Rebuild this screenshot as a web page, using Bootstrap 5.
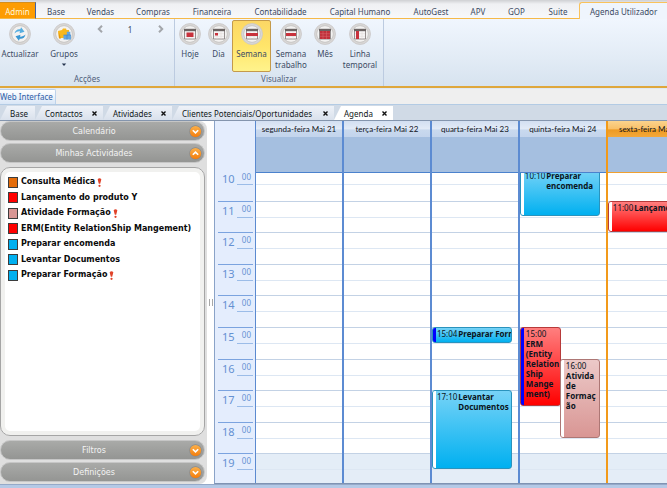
<!DOCTYPE html>
<html lang="pt">
<head>
<meta charset="utf-8">
<meta name="viewport" content="width=device-width, initial-scale=1">
<title>Agenda Utilizador</title>
<link href="https://cdn.jsdelivr.net/npm/bootstrap@5.3.0/dist/css/bootstrap.min.css" rel="stylesheet">
<style>
body{height:100vh;min-height:480px;font-family:"Noto Sans","Open Sans",sans-serif;font-size:8px;line-height:11px;color:#3b4a63;background:#fff;overflow:hidden}
button{border:0;background:none;padding:0;color:inherit;font:inherit}
a{color:inherit;text-decoration:none}
/* ribbon */
.ribbon-tabs{display:grid;grid-template-columns:36px 40px 49px 56px 62px 75px 84px 58px 36px 41px 42px 1fr;height:19px;background:linear-gradient(#cfd0d3,#eff0f3 4px,#f8f9fb)}
.ribbon-tabs a{display:flex;align-items:center;justify-content:center;padding-top:4px;border-bottom:1px solid #f6b948;white-space:nowrap}
.ribbon-tabs a.admin-tab{background:#fd9c02;color:#fff8dc;border-right:1px solid #3f62a8;border-top:1px solid #d58e1c;margin-top:2px;padding-top:1px}
.ribbon-tabs a.open-tab{justify-content:flex-start;background:#eff5fd;border:1px solid #f9c25b;border-width:1px 0 0 1px;border-radius:3px 0 0 0;margin-top:2px;padding:1px 0 0 10px}
.ribbon{height:69px;background:linear-gradient(#f0f6fe,#e3ecf6 55%,#d7e3ef);border-bottom:2px solid #dfa73c}
.ribbon-group{display:grid;grid-template-rows:1fr 13px;border-right:1px solid #bccbe0;text-align:center}
.ribbon-group h2{font-size:8px;line-height:11px;margin:0;font-weight:400;color:#52617c}
.tool{display:flex;flex-direction:column;align-items:center;padding-top:2px;border:1px solid transparent;border-radius:2px;height:52px;margin-top:1px}
.tool svg{width:22px;height:22px;margin-bottom:3px;flex:none}
.tool .caret{height:11px}
.tool.chosen{background:linear-gradient(#fcd765,#ffe56a 50%,#fff38c);border-color:#c49a4b}
.tools-a{display:grid;grid-template-columns:40px 48px 24px 36px 26px}
.tools-b{display:grid;grid-template-columns:30px 27px 39px 40px 28px 42px;padding:0 2px 0 0}
.pager{height:20px;display:flex;align-items:center;justify-content:center}
/* window tabs */
.window-bar{height:17px;background:#efefef;border-top:1px solid #dfe9f4;border-bottom:1px solid #b3cbe4}
.window-bar a{background:linear-gradient(#fff,#d9e6f6);color:#2f5fa8;border:1px solid #bdd2ea;border-width:1px 1px 0 0;border-radius:0 2px 0 0;width:56px;line-height:14px;white-space:nowrap}
.doc-bar{display:grid;grid-template-columns:35px 68px 69px 162px 59px;height:16px;background:#d0dae6;border-bottom:1px solid #8495ad;color:#101820}
.doc-tab{display:flex;align-items:center;justify-content:space-between;height:14px;margin-top:1px;padding:0 6px 0 10px;background:linear-gradient(#eef2f8,#d9e1ec);clip-path:polygon(7px 0,100% 0,100% 100%,0 100%);white-space:nowrap}
.doc-tab.shown{background:#fff}
.doc-tab svg{width:5px;height:5px;display:block}
/* side panel */
.side{width:207px;background:#dfdfdf;border-radius:0 8px 8px 0;padding:0 2px 2px 0;gap:2px}
.side-head{display:flex;align-items:center;height:20px;background:linear-gradient(#a9aaa8,#949593);border:1px solid #c6c6c6;border-radius:10px;color:#f3f3f3;padding-right:2px;font-family:"DejaVu Sans",Verdana,sans-serif;flex:none}
.side-head span{flex:1;padding-right:2px}
.side-head svg{width:13px;height:13px}
.side-list{border:1px solid #a5a5a5;border-radius:10px;background:#fff;box-shadow:inset 0 0 0 4px #f1f1ef;padding:6px 7px;margin:2px 0;font:bold 8px/16px "DejaVu Sans",Verdana,sans-serif;color:#0a0a0a}
.side-list li{display:flex;align-items:center;height:16px;white-space:nowrap}
.side-list li:nth-child(even){height:15px}
.swatch{width:10px;height:11px;border:1px solid #3c3c3c;margin-right:3px}
.flag{width:5px;height:9px;margin-left:2px}
.c-orange{background:#e46c0a}.c-red{background:#f00}.c-pink{background:#d99694}.c-blue{background:#00b0f0}
.grip{width:7px}
.grip i{display:block;width:4px;height:7px;border:1px solid #a8a8a8;border-width:0 1px}
/* calendar */
.agenda{border-left:1px solid #8aa3c8;border-bottom:1px solid #7f93b3;overflow:hidden}
.times{width:41px;display:grid;grid-template-rows:52px 1fr;background:#e4edfd;border-right:1px solid #5b8ad0;color:#6491d2}
.hour-rows{display:grid;grid-template-rows:28fr repeat(8,32fr) 30fr;overflow:hidden;min-height:0}
.hour-rows>div{min-height:0}
.times .hour-rows>div{margin:0 2px 0 3px;border-top:1px solid #7ba3df;display:flex;justify-content:space-between;padding:3px 1px 0 4px;font:11px/12px "Noto Sans",sans-serif;background:linear-gradient(#9bbce8,#9bbce8) right 15px/16px 1px no-repeat}
.times .hour-rows>div:first-child{border-top:0;padding-top:0;background-position:right 11px}
.times sup{font-size:8px;line-height:8px;top:0;padding-right:1px}
.days{display:grid;grid-auto-flow:column;grid-auto-columns:21.4%;overflow:hidden}
.day{display:grid;grid-template-rows:16px 36px 1fr;border-right:2px solid #5c8bd2;min-width:0;min-height:0}
.day h3{margin:0;font:8px/16px Lato,"Noto Sans",sans-serif;text-align:center;white-space:nowrap;overflow:hidden;color:#10141c;background:linear-gradient(#d3dff1,#e3ebf7 50%,#c9d9ee 55%,#c3d4ec)}
.all-day{background:#a5bfe0;border-bottom:1px solid #4b82cd}
.slots{position:relative;overflow:hidden;min-height:0}
.slots .hour-rows{height:100%}
.slots .hour-rows>div{border-top:1px solid #c3d2e5;background:linear-gradient(#dde7f3,#dde7f3) left 15px/100% 1px no-repeat}
.slots .hour-rows>div:first-child{border-top:0;background-position:left 11px}
.slots .hour-rows>div:last-child{background-color:#e4edf7}
.day.before-today{border-right-color:#f29a1a}
.day.today h3{background:linear-gradient(#fbd38d,#f8c068 50%,#ee9a22 55%,#f3a83a)}
.day.today .all-day{border-bottom-color:#f0a030}
.event{position:absolute;left:0;width:80px;display:flex;gap:1px;border:1px solid;border-radius:3px;padding:1px 0 0 4px;overflow:hidden;font-size:8px;line-height:10px;color:#0b1420}
.event::before{content:"";position:absolute;left:0;top:0;bottom:0;width:3px;background:#fff}
.event.busy::before{background:#00f}
.event b{min-width:0}
.event.narrow{width:41px;display:block;overflow-wrap:anywhere;padding-left:5px}
.event.narrow b{display:block}
.event.second{left:40px;width:40px}
.ev-blue{background:linear-gradient(#77d3f7,#00b0f0);border-color:#2a93bd}
.ev-red{background:linear-gradient(#ff7f7f,#f00);border-color:#b73a3a}
.ev-pink{background:linear-gradient(#ecc9c8,#d99694);border-color:#ad7775}
.foot{height:4px;background:#b4c9e6;border-top:1px solid #95a9c8}
</style>
<script src="https://cdn.jsdelivr.net/npm/bootstrap@5.3.0/dist/js/bootstrap.bundle.min.js"></script>
</head>
<body class="d-flex flex-column m-0">
<svg width="0" height="0" class="position-absolute" aria-hidden="true">
<defs>
<radialGradient id="metal"><stop offset=".55" stop-color="#f4f3f1"/><stop offset=".8" stop-color="#dbd9d7"/><stop offset="1" stop-color="#c2c0be"/></radialGradient>
<linearGradient id="amber" x2="0" y2="1"><stop offset="0" stop-color="#fbb04a"/><stop offset="1" stop-color="#f47d0c"/></linearGradient>
<symbol id="disc" viewBox="0 0 22 22"><circle cx="11" cy="11" r="10.500" fill="#d9d7d6" stroke="#c9c7c6" stroke-width=".8"/><circle cx="11" cy="11" r="8.300" fill="#f3f2f1" stroke="#bdbbba" stroke-width=".7"/></symbol>
<symbol id="sheet" viewBox="0 0 22 22"><path d="M5.500 6.500h11v9.500h-11z" fill="#f7f5f5" stroke="#8b8583" stroke-width=".9"/><path d="M5 5.800h12v2.400H5z" fill="#6b6463"/><path d="M9 8v8M13 8v8M6 10.700h10M6 13.300h10" stroke="#dcd8d7" stroke-width=".5"/></symbol>
<symbol id="down" viewBox="0 0 13 13"><circle cx="6.500" cy="6.500" r="6.200" fill="#8a8a8a"/><circle cx="6.500" cy="6.500" r="5.600" fill="url(#amber)"/><path d="M3.800 5.200 6.500 7.900 9.200 5.200" fill="none" stroke="#fff" stroke-width="1.600"/></symbol>
<symbol id="up" viewBox="0 0 13 13"><circle cx="6.500" cy="6.500" r="6.200" fill="#8a8a8a"/><circle cx="6.500" cy="6.500" r="5.600" fill="url(#amber)"/><path d="M3.800 7.800 6.500 5.100 9.200 7.800" fill="none" stroke="#fff" stroke-width="1.600"/></symbol>
<symbol id="cross" viewBox="0 0 5 5"><path d="M.5.500l4 4M4.500.500l-4 4" stroke="#111" stroke-width="1.400"/></symbol>
<symbol id="bang" viewBox="0 0 4 8"><path d="M.3 1Q2-.6 3.700 1L2.600 5.200H1.400z" fill="#e0432a"/><circle cx="2" cy="6.900" r="1" fill="#e0432a"/></symbol>
</defs>
</svg>
<nav class="ribbon-tabs flex-shrink-0">
<a href="#" class="admin-tab">Admin</a><a href="#">Base</a><a href="#">Vendas</a><a href="#">Compras</a><a href="#">Financeira</a><a href="#">Contabilidade</a><a href="#">Capital Humano</a><a href="#">AutoGest</a><a href="#">APV</a><a href="#">GOP</a><a href="#">Suite</a><a href="#" class="open-tab">Agenda Utilizador</a>
</nav>
<section class="ribbon d-flex flex-shrink-0">
<div class="ribbon-group">
<div class="tools-a">
<button class="tool"><svg viewBox="0 0 22 22"><use href="#disc"/><path d="M5.500 10.500c.5-3 3-4.700 5.800-4.200l.8-2 3.400 4.400-5 1.600.5-1.900c-2-.2-3.500.5-5.500 2.100z" fill="#57aee0"/><path d="M16.500 11.500c-.5 3-3 4.700-5.800 4.200l-.8 2-3.400-4.400 5-1.600-.5 1.900c2 .2 3.500-.5 5.500-2.100z" fill="#3a97d2"/></svg>Actualizar</button>
<button class="tool"><svg viewBox="0 0 22 22"><use href="#disc"/><path d="M5 8l4-1 1-1.500h3l.5 1.500H16v8H6z" fill="#f9b81c"/><path d="M5.500 8.500 8 15.500H6z" fill="#e79808"/><path d="M10.500 12h3.300V8.700h3.500V12H18v4.500h-7.500z" fill="#63a6e0"/><path d="M14 12v4.500M10.500 12H18" stroke="#3f7fc4" stroke-width=".6"/></svg>Grupos<svg class="caret" viewBox="0 0 22 11"><path d="M8.800 4.500h4.400L11 7z" fill="#26344f"/></svg></button>
<button class="pager" aria-label="Anterior"><svg width="6" height="8" viewBox="0 0 6 8"><path d="M5 .8 1.800 4 5 7.200" fill="none" stroke="#a3a6ab" stroke-width="2"/></svg></button>
<span class="pager">1</span>
<button class="pager" aria-label="Seguinte"><svg width="6" height="8" viewBox="0 0 6 8"><path d="M1 .8 4.200 4 1 7.200" fill="none" stroke="#a3a6ab" stroke-width="2"/></svg></button>
</div>
<h2>Acções</h2>
</div>
<div class="ribbon-group">
<div class="tools-b">
<button class="tool"><svg viewBox="0 0 22 22"><use href="#disc"/><use href="#sheet"/><path d="M7.500 9.500h7v4.500h-7z" fill="#c8323c"/></svg>Hoje</button>
<button class="tool"><svg viewBox="0 0 22 22"><use href="#disc"/><use href="#sheet"/><path d="M7 10h3v2.500H7z" fill="#c8323c"/></svg>Dia</button>
<button class="tool chosen"><svg viewBox="0 0 22 22"><use href="#disc"/><use href="#sheet"/><path d="M5 10h12v3H5z" fill="#c8323c"/></svg>Semana</button>
<button class="tool"><svg viewBox="0 0 22 22"><use href="#disc"/><use href="#sheet"/><path d="M6 10h10v3H6z" fill="#c8323c"/></svg>Semana<br>trabalho</button>
<button class="tool"><svg viewBox="0 0 22 22"><use href="#disc"/><use href="#sheet"/><path d="M6 8h10v8H6z" fill="#c0303a"/><path d="M9 8v8M12.500 8v8M6 10.700h10M6 13.300h10" stroke="#d96a70" stroke-width=".5"/></svg>Mês</button>
<button class="tool"><svg viewBox="0 0 22 22"><use href="#disc"/><use href="#sheet"/><path d="M7 8h3v8H7z" fill="#c8323c"/></svg>Linha<br>temporal</button>
</div>
<h2>Visualizar</h2>
</div>
</section>
<nav class="window-bar d-flex flex-shrink-0"><a href="#">Web Interface</a></nav>
<nav class="doc-bar flex-shrink-0">
<div class="doc-tab"><a href="#">Base</a></div>
<div class="doc-tab"><a href="#">Contactos</a><button aria-label="Fechar"><svg><use href="#cross"/></svg></button></div>
<div class="doc-tab"><a href="#">Atividades</a><button aria-label="Fechar"><svg><use href="#cross"/></svg></button></div>
<div class="doc-tab"><a href="#">Clientes Potenciais/Oportunidades</a><button aria-label="Fechar"><svg><use href="#cross"/></svg></button></div>
<div class="doc-tab shown"><a href="#">Agenda</a><button aria-label="Fechar"><svg><use href="#cross"/></svg></button></div>
</nav>
<main class="d-flex flex-grow-1 overflow-hidden">
<aside class="side d-flex flex-column flex-shrink-0">
<button class="side-head"><span>Calendário</span><svg><use href="#down"/></svg></button>
<button class="side-head"><span>Minhas Actividades</span><svg><use href="#up"/></svg></button>
<ul class="side-list list-unstyled flex-grow-1">
<li><i class="swatch c-orange"></i>Consulta Médica<svg class="flag" viewBox="0 0 4 8"><use href="#bang"/></svg></li>
<li><i class="swatch c-red"></i>Lançamento do produto Y</li>
<li><i class="swatch c-pink"></i>Atividade Formação<svg class="flag" viewBox="0 0 4 8"><use href="#bang"/></svg></li>
<li><i class="swatch c-red"></i>ERM(Entity RelationShip Mangement)</li>
<li><i class="swatch c-blue"></i>Preparar encomenda</li>
<li><i class="swatch c-blue"></i>Levantar Documentos</li>
<li><i class="swatch c-blue"></i>Preparar Formação<svg class="flag" viewBox="0 0 4 8"><use href="#bang"/></svg></li>
</ul>
<button class="side-head"><span>Filtros</span><svg><use href="#down"/></svg></button>
<button class="side-head"><span>Definições</span><svg><use href="#down"/></svg></button>
</aside>
<div class="grip d-flex align-items-center justify-content-center flex-shrink-0"><i></i></div>
<section class="agenda d-flex flex-grow-1">
<div class="times flex-shrink-0"><div></div>
<div class="hour-rows"><div>10<sup>00</sup></div><div>11<sup>00</sup></div><div>12<sup>00</sup></div><div>13<sup>00</sup></div><div>14<sup>00</sup></div><div>15<sup>00</sup></div><div>16<sup>00</sup></div><div>17<sup>00</sup></div><div>18<sup>00</sup></div><div>19<sup>00</sup></div></div>
</div>
<div class="days flex-grow-1">
<div class="day"><h3>segunda-feira Mai 21</h3><div class="all-day"></div><div class="slots"><div class="hour-rows"><div></div><div></div><div></div><div></div><div></div><div></div><div></div><div></div><div></div><div></div></div></div></div>
<div class="day"><h3>terça-feira Mai 22</h3><div class="all-day"></div><div class="slots"><div class="hour-rows"><div></div><div></div><div></div><div></div><div></div><div></div><div></div><div></div><div></div><div></div></div></div></div>
<div class="day"><h3>quarta-feira Mai 23</h3><div class="all-day"></div><div class="slots"><div class="hour-rows"><div></div><div></div><div></div><div></div><div></div><div></div><div></div><div></div><div></div><div></div></div>
<div class="event ev-blue busy" style="top:49.7%;height:5.1%"><span>15:04</span><b class="text-nowrap">Preparar Formação</b></div>
<div class="event ev-blue" style="top:70.1%;height:25.5%"><span>17:10</span><b>Levantar Documentos</b></div>
</div></div>
<div class="day before-today"><h3>quinta-feira Mai 24</h3><div class="all-day"></div><div class="slots"><div class="hour-rows"><div></div><div></div><div></div><div></div><div></div><div></div><div></div><div></div><div></div><div></div></div>
<div class="event ev-blue" style="top:-1.3%;height:15.3%"><span>10:10</span><b>Preparar encomenda</b></div>
<div class="event ev-red busy narrow" style="top:49.7%;height:25.5%"><span>15:00</span><b>ERM (Entity RelationShip Mangement)</b></div>
<div class="event ev-pink narrow second" style="top:59.9%;height:25.5%"><span>16:00</span><b>Atividade Formação</b></div>
</div></div>
<div class="day today"><h3>sexta-feira Mai 25</h3><div class="all-day"></div><div class="slots"><div class="hour-rows"><div></div><div></div><div></div><div></div><div></div><div></div><div></div><div></div><div></div><div></div></div>
<div class="event ev-red" style="top:8.9%;height:10.2%"><span>11:00</span><b class="text-nowrap">Lançamento do produto Y</b></div>
</div></div>
</div>
</section>
</main>
<footer class="foot flex-shrink-0"></footer>
</body>
</html>
